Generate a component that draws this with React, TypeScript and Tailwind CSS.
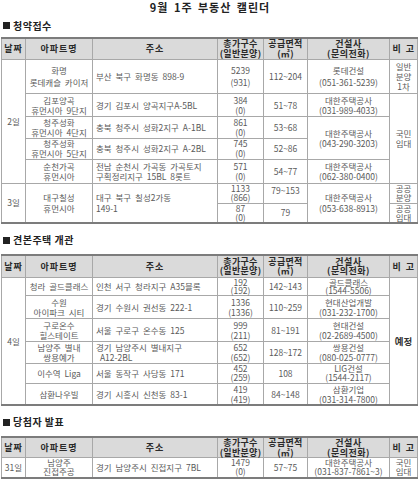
import React from "react";

const B = "border border-[#a8a8a8] p-0 align-middle";
const C = `${B} text-center`;
const A = `${B} text-left pl-[3px]`;
const H = `${B} bg-[#dadada] text-center font-bold text-[#2a2a2a] text-[9px] leading-[9.5px]`;

function Cols() {
  return (
    <colgroup>
      <col className="w-[24px]" />
      <col className="w-[67px]" />
      <col className="w-[125px]" />
      <col className="w-[46px]" />
      <col className="w-[44px]" />
      <col className="w-[82px]" />
      <col className="w-[28px]" />
    </colgroup>
  );
}

function Head({ h }: { h: string }) {
  return (
    <tr className={h}>
      <th className={`${H} tracking-[1px]`}>날짜</th>
      <th className={`${H} tracking-[1px]`}>아파트명</th>
      <th className={`${H} tracking-[1px]`}>주소</th>
      <th className={`${H} tracking-[0.3px]`}>
        총가구수
        <br />
        (일반분양)
      </th>
      <th className={`${H} tracking-[0.3px]`}>
        공급면적
        <br />
        (㎡)
      </th>
      <th className={`${H} tracking-[0.5px]`}>
        건설사
        <br />
        (문의전화)
      </th>
      <th className={`${H} tracking-[0.5px]`}>비 고</th>
    </tr>
  );
}

function Section({ title, first }: { title: string; first?: boolean }) {
  return (
    <div
      className={
        first
          ? "h-[23px] flex items-center pl-[3px] text-[10px] font-bold text-[#222] leading-[12px] tracking-[0.5px]"
          : "h-[30px] pt-[2px] flex items-center pl-[3px] text-[10px] font-bold text-[#222] leading-[12px] tracking-[0.5px]"
      }
    >
      <span className="inline-block w-[7px] h-[7px] bg-[#222] mr-[3px]" />
      {title}
    </div>
  );
}

const TABLE =
  "w-[416px] ml-[1px] table-fixed border-collapse border-y-2 border-y-[#7c7c7c] text-[8.5px] leading-[10px] text-[#5a5a5a] [word-spacing:2px]";

export default function App() {
  return (
    <div className="w-[420px] h-[480px] overflow-hidden bg-white font-['Noto_Sans_CJK_KR',sans-serif]">
      <div className="h-[14px] text-center font-bold text-[11px] leading-[14px] tracking-[1px] text-[#222] [word-spacing:2px]">
        9월 1주 부동산 캘린더
      </div>

      <Section title="청약접수" first />
      <table className={TABLE}>
        <Cols />
        <tbody>
          <Head h="h-[21px]" />
          <tr className="h-[34px] leading-[12px]">
            <td rowSpan={5} className={C}>2일</td>
            <td className={C}>
              화명
              <br />
              롯데캐슬 카이저
            </td>
            <td className={A}>부산 북구 화명동 898-9</td>
            <td className={C}>
              5239
              <br />
              (931)
            </td>
            <td className={C}>112~204</td>
            <td className={C}>
              롯데건설
              <br />
              (051-361-5239)
            </td>
            <td className={`${C} leading-[10px]`}>
              일반
              <br />
              분양
              <br />
              1차
            </td>
          </tr>
          <tr className="h-[23px]">
            <td className={C}>
              김포양곡
              <br />
              휴먼시아 9단지
            </td>
            <td className={A}>경기 김포시 양곡지구A-5BL</td>
            <td className={C}>
              384
              <br />
              (0)
            </td>
            <td className={C}>51~78</td>
            <td className={C}>
              대한주택공사
              <br />
              (031-989-4033)
            </td>
            <td rowSpan={4} className={C}>
              국민
              <br />
              임대
            </td>
          </tr>
          <tr className="h-[22px]">
            <td className={C}>
              청주성화
              <br />
              휴먼시아 4단지
            </td>
            <td className={A}>충북 청주시 성화2지구 A-1BL</td>
            <td className={C}>
              861
              <br />
              (0)
            </td>
            <td className={C}>53~68</td>
            <td rowSpan={2} className={C}>
              대한주택공사
              <br />
              (043-290-3203)
            </td>
          </tr>
          <tr className="h-[21px] leading-[9.5px]">
            <td className={C}>
              청주성화
              <br />
              휴먼시아 5단지
            </td>
            <td className={A}>충북 청주시 성화2지구 A-2BL</td>
            <td className={C}>
              745
              <br />
              (0)
            </td>
            <td className={C}>52~86</td>
          </tr>
          <tr className="h-[24px]">
            <td className={C}>
              순천가곡
              <br />
              휴먼시아
            </td>
            <td className={`${A} whitespace-nowrap`}>
              전남 순천시 가곡동 가곡토지
              <br />
              구획정리지구 15BL 8롯트
            </td>
            <td className={C}>
              571
              <br />
              (0)
            </td>
            <td className={C}>54~77</td>
            <td className={C}>
              대한주택공사
              <br />
              (062-380-0400)
            </td>
          </tr>
          <tr className="h-[20px] leading-[9px]">
            <td rowSpan={2} className={C}>3일</td>
            <td rowSpan={2} className={`${C} leading-[11px]`}>
              대구칠성
              <br />
              휴먼시아
            </td>
            <td rowSpan={2} className={`${A} leading-[11px]`}>
              대구 북구 칠성2가동
              <br />
              149-1
            </td>
            <td className={C}>
              1133
              <br />
              (866)
            </td>
            <td className={`${B} text-center !align-top pt-[2px]`}>79~153</td>
            <td rowSpan={2} className={`${C} leading-[11px]`}>
              대한주택공사
              <br />
              (053-638-8913)
            </td>
            <td className={C}>
              공공
              <br />
              분양
            </td>
          </tr>
          <tr className="h-[20px] leading-[9px]">
            <td className={C}>
              87
              <br />
              (0)
            </td>
            <td className={C}>79</td>
            <td className={C}>
              공공
              <br />
              임대
            </td>
          </tr>
        </tbody>
      </table>

      <Section title="견본주택 개관" />
      <table className={TABLE}>
        <Cols />
        <tbody>
          <Head h="h-[22px]" />
          <tr className="h-[18px] leading-[8.5px]">
            <td rowSpan={6} className={`${C} leading-[10px]`}>4일</td>
            <td className={C}>청라 골드클래스</td>
            <td className={A}>인천 서구 청라지구 A35블록</td>
            <td className={C}>
              192
              <br />
              (192)
            </td>
            <td className={C}>142~143</td>
            <td className={C}>
              골드클래스
              <br />
              (1544-5506)
            </td>
            <td rowSpan={6} className={`${C} font-bold text-[#333] text-[9.5px] leading-[10px]`}>
              예정
            </td>
          </tr>
          <tr className="h-[23px]">
            <td className={C}>
              수원
              <br />
              아이파크 시티
            </td>
            <td className={A}>경기 수원시 권선동 222-1</td>
            <td className={C}>
              1336
              <br />
              (1336)
            </td>
            <td className={C}>110~259</td>
            <td className={C}>
              현대산업개발
              <br />
              (031-232-1700)
            </td>
          </tr>
          <tr className="h-[23px]">
            <td className={C}>
              구로온수
              <br />
              힐스테이트
            </td>
            <td className={A}>서울 구로구 온수동 125</td>
            <td className={C}>
              999
              <br />
              (211)
            </td>
            <td className={C}>81~191</td>
            <td className={C}>
              현대건설
              <br />
              (02-2689-4500)
            </td>
          </tr>
          <tr className="h-[22px]">
            <td className={C}>
              남양주 별내
              <br />
              쌍용예가
            </td>
            <td className={A}>
              경기 남양주시 별내지구
              <br />
              &nbsp;A12-2BL
            </td>
            <td className={C}>
              652
              <br />
              (652)
            </td>
            <td className={C}>128~172</td>
            <td className={C}>
              쌍용건설
              <br />
              (080-025-0777)
            </td>
          </tr>
          <tr className="h-[20px] leading-[9px]">
            <td className={C}>이수역 Liga</td>
            <td className={A}>서울 동작구 사당동 171</td>
            <td className={C}>
              452
              <br />
              (259)
            </td>
            <td className={C}>108</td>
            <td className={C}>
              LIG건설
              <br />
              (1544-2117)
            </td>
          </tr>
          <tr className="h-[22px]">
            <td className={C}>삼환나우빌</td>
            <td className={A}>경기 시흥시 신천동 83-1</td>
            <td className={C}>
              419
              <br />
              (419)
            </td>
            <td className={C}>84~148</td>
            <td className={C}>
              삼환기업
              <br />
              (031-314-7800)
            </td>
          </tr>
        </tbody>
      </table>

      <Section title="당첨자 발표" />
      <table className={TABLE}>
        <Cols />
        <tbody>
          <Head h="h-[20px]" />
          <tr className="h-[20px] leading-[9px]">
            <td className={C}>31일</td>
            <td className={C}>
              남양주
              <br />
              진접주공
            </td>
            <td className={A}>경기 남양주시 진접지구 7BL</td>
            <td className={C}>
              1479
              <br />
              (0)
            </td>
            <td className={C}>57~75</td>
            <td className={C}>
              대한주택공사
              <br />
              (031-837-7861~3)
            </td>
            <td className={C}>
              국민
              <br />
              임대
            </td>
          </tr>
        </tbody>
      </table>
    </div>
  );
}
